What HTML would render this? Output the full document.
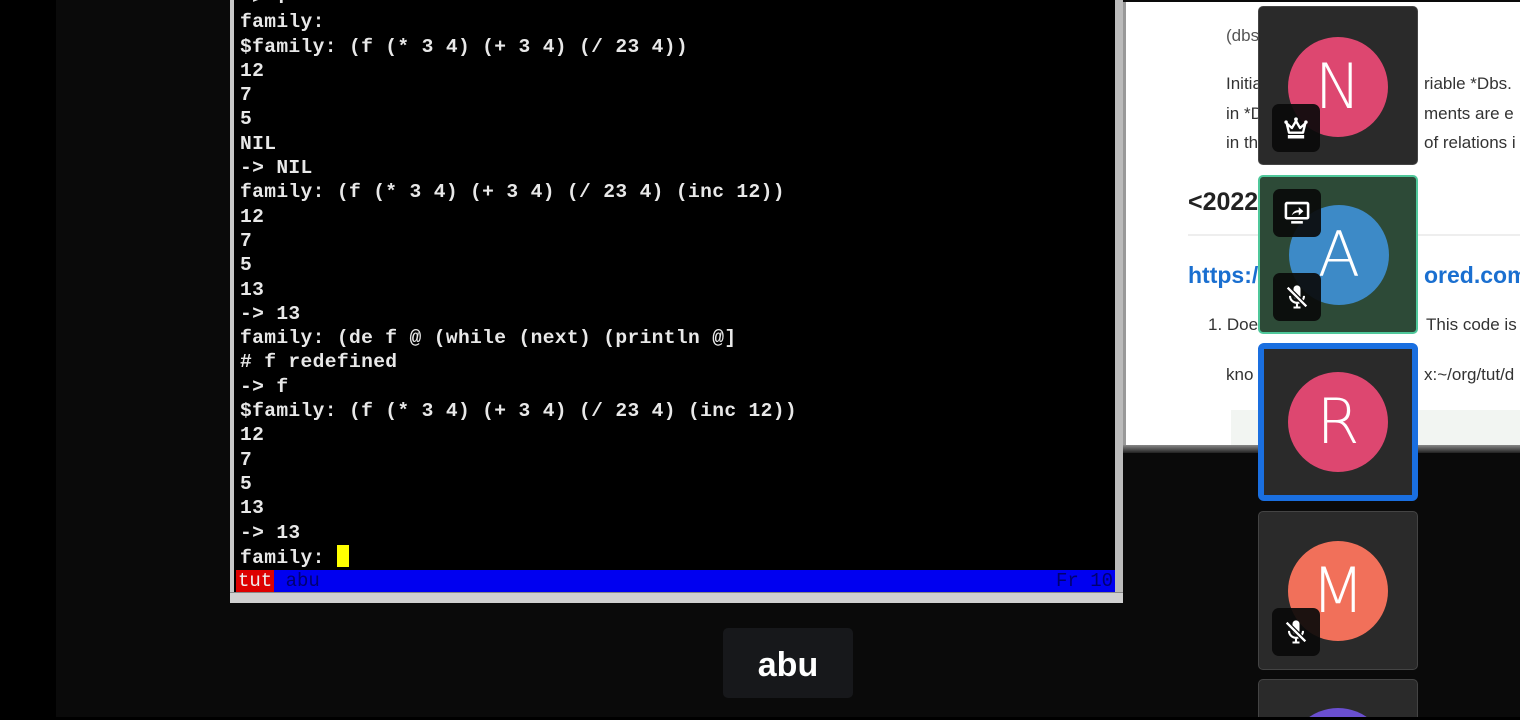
<!DOCTYPE html>
<html style="width:1520px;height:720px;overflow:hidden"><head><style>
body{margin:0;width:1520px;height:720px;background:#000;overflow:hidden;position:relative;font-family:"Liberation Sans",sans-serif}
.main{position:absolute;left:56px;top:0;width:1464px;height:717px;background:#0a0a0a}
.term{position:absolute;left:230px;top:0;width:887px;height:602px;background:#000;border-left:4px solid #c8c8c8;box-sizing:border-box}
.termb{position:absolute;left:230px;top:592px;width:893px;height:10px;background:#d0d0d0;border-top:1px solid #888}
.termr{position:absolute;left:1115px;top:0;width:8px;height:602px;background:#bbb}
pre{position:absolute;left:240px;top:-14px;margin:0;font-family:"Liberation Mono",monospace;font-size:19.6px;line-height:24.3px;color:#e8e8e8;font-weight:bold;letter-spacing:0.35px}
.cur{display:inline-block;width:12px;height:22px;background:#ff0;vertical-align:-4px}
.ml{position:absolute;left:236px;top:570px;width:879px;height:22px;background:#0000f0;font-family:"Liberation Mono",monospace;font-size:19px;line-height:22px;color:#000070}
.ml .t{background:#d00;color:#eee;padding:0 2px;display:inline-block}
.doc{position:absolute;left:1123px;top:2px;width:397px;height:443px;background:#fff;color:#333;font-size:17px;border-left:3px solid #999;overflow:hidden}
.doc div{position:absolute;white-space:nowrap}
.docbot{position:absolute;left:1123px;top:445px;width:397px;height:8px;background:linear-gradient(#888,#222)}
.tile{position:absolute;left:1258px;width:160px;height:159px;background:#2a2a2a;border:1px solid #444;box-sizing:border-box;border-radius:5px}
.av{position:absolute;left:29px;width:100px;height:100px;border-radius:50%;color:#fff;font-size:62px;text-align:center;line-height:100px;font-family:"DejaVu Sans",sans-serif;font-weight:200}
.ic{position:absolute;left:13px;width:48px;height:48px;background:rgba(10,10,10,.92);border-radius:7px}
.ic svg{position:absolute;left:10px;top:10px}
.lbl{position:absolute;left:723px;top:628px;width:130px;height:70px;background:#17181b;border-radius:5px;color:#fff;font-weight:bold;font-size:34px;text-align:center;line-height:74px}
</style></head><body>
<div class="main"></div>
<div class="term"></div>
<pre>-&gt; f
family:
$family: (f (* 3 4) (+ 3 4) (/ 23 4))
12
7
5
NIL
-&gt; NIL
family: (f (* 3 4) (+ 3 4) (/ 23 4) (inc 12))
12
7
5
13
-&gt; 13
family: (de f @ (while (next) (println @]
# f redefined
-&gt; f
$family: (f (* 3 4) (+ 3 4) (/ 23 4) (inc 12))
12
7
5
13
-&gt; 13
family: <span class="cur"></span></pre>
<div class="ml"><span class="t">tut</span> abu<span style="position:absolute;right:2px">Fr 10</span></div>
<div class="termr"></div>
<div class="termb"></div>
<div class="doc">
<div style="left:100px;top:24px;color:#555">(dbs</div>
<div style="left:100px;top:72px">Initia</div><div style="left:298px;top:72px">riable *Dbs.</div>
<div style="left:100px;top:102px">in *D</div><div style="left:298px;top:102px">ments are e</div>
<div style="left:100px;top:131px">in th</div><div style="left:298px;top:131px">of relations i</div>
<div style="left:62px;top:186px;font-size:25px;font-weight:bold;color:#222">&lt;2022</div>
<div style="left:62px;top:232px;width:340px;border-top:2px solid #eee"></div>
<div style="left:62px;top:260px;font-size:23px;font-weight:bold;color:#1a6fd0">https:/</div><div style="left:298px;top:260px;font-size:23px;font-weight:bold;color:#1a6fd0">ored.com</div>
<div style="left:82px;top:313px">1. Doe</div><div style="left:300px;top:313px">This code is</div>
<div style="left:100px;top:363px">kno</div><div style="left:298px;top:363px">x:~/org/tut/d</div>
<div style="left:105px;top:408px;width:300px;height:40px;background:#f2f5f2"></div>
</div>
<div class="docbot"></div>

<div class="tile" style="top:6px"><div class="av" style="top:30px;background:#dd4770">N</div>
<div class="ic" style="top:97px"><svg width="28" height="28" viewBox="0 0 24 24"><path d="M4 8l2 8h12l2-8-4.5 4L12 6l-3.5 6z" fill="none" stroke="#fff" stroke-width="2" stroke-linejoin="round"/><circle cx="12" cy="4.5" r="1.6" fill="#fff"/><circle cx="3.5" cy="7" r="1.5" fill="#fff"/><circle cx="20.5" cy="7" r="1.5" fill="#fff"/><rect x="5" y="18" width="14" height="3" fill="#fff"/></svg></div></div>
<div class="tile" style="top:175px;background:#2d4a37;border:2px solid #4fc79a"><div class="av" style="top:28px;background:#3d8ac7">A</div>
<div class="ic" style="top:12px"><svg width="28" height="28" viewBox="0 0 24 24"><rect x="2.5" y="3.5" width="19" height="13" rx="1" fill="none" stroke="#fff" stroke-width="2.2"/><path d="M7 20h10" stroke="#fff" stroke-width="2.2"/><path d="M7.5 14c1-3 3-4.5 6-4.5V7l4 3.5-4 3.5v-2.5c-2.5 0-4.5.8-6 2.5z" fill="#fff"/></svg></div>
<div class="ic" style="top:96px"><svg width="28" height="28" viewBox="0 0 24 24"><rect x="9" y="2" width="6" height="12" rx="3" fill="#fff"/><path d="M6 11a6 6 0 0 0 12 0M12 17v4M9 21h6" fill="none" stroke="#fff" stroke-width="1.8"/><path d="M4 4l16 16" stroke="#0c0c0c" stroke-width="4"/><path d="M4 4l16 16" stroke="#fff" stroke-width="2"/></svg></div></div>
<div class="tile" style="top:343px;border:6px solid #1a6fe0;border-radius:6px;height:158px"><div class="av" style="top:23px;left:24px;background:#dd4770">R</div></div>
<div class="tile" style="top:511px"><div class="av" style="top:29px;background:#f1705a">M</div>
<div class="ic" style="top:96px"><svg width="28" height="28" viewBox="0 0 24 24"><rect x="9" y="2" width="6" height="12" rx="3" fill="#fff"/><path d="M6 11a6 6 0 0 0 12 0M12 17v4M9 21h6" fill="none" stroke="#fff" stroke-width="1.8"/><path d="M4 4l16 16" stroke="#0c0c0c" stroke-width="4"/><path d="M4 4l16 16" stroke="#fff" stroke-width="2"/></svg></div></div>
<div class="tile" style="top:679px;height:38px;overflow:hidden;border-bottom:none;border-radius:5px 5px 0 0"><div class="av" style="top:28px;background:#6a4fd0"></div></div>
<div style="position:absolute;left:0;top:717px;width:1520px;height:3px;background:#000"></div>
<div class="lbl">abu</div>
</body></html>
